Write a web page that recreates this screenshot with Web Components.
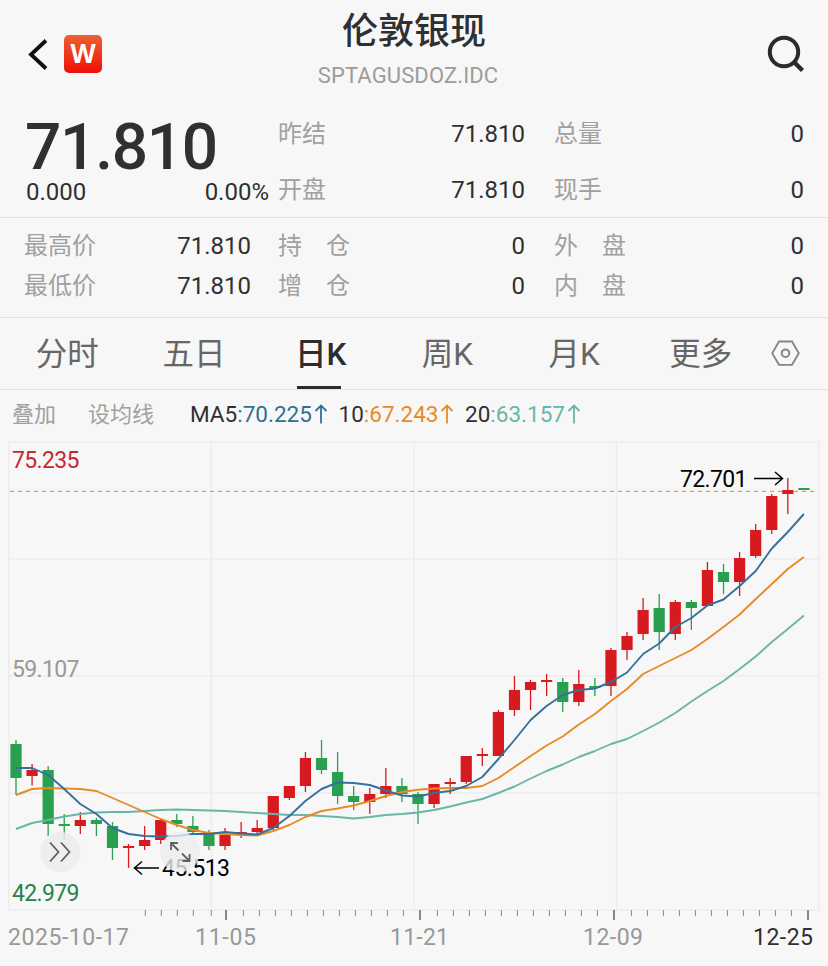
<!DOCTYPE html>
<html lang="zh-CN">
<head>
<meta charset="utf-8">
<title>伦敦银现</title>
<style>
  body {
    margin: 0;
    background: #f7f7f7;
    color: #303030;
    font-family: Roboto, "Noto Sans CJK SC", sans-serif;
  }
</style>
</head>
<body>
<quote-page></quote-page>

<script>
/**
 * Title bar: back arrow, app logo, instrument name and search
 */
class QuoteHeader extends HTMLElement {
  constructor() {
    super();
    this.attachShadow({mode: 'open'}).innerHTML = `
      <style>
        :host { display: grid; grid-template-columns: 160px 1fr 160px; height: 106px; }
        .left { display: flex; align-items: center; height: 108px; padding-left: 26px; gap: 15px; }
        .logo {
          width: 38px; height: 38px; border-radius: 5px;
          background: linear-gradient(#ee6030, #ee1008);
          color: #fff; font: bold 26px/37px "Open Sans", sans-serif; text-align: center;
        }
        .mid { text-align: center; }
        .name { font-size: 36px; line-height: 40px; font-weight: 500; padding-top: 12px; }
        .code { font-size: 22px; line-height: 26px; color: #9c9c9c; margin: 11px 12px 0 0; letter-spacing: .12px; }
        .right { display: flex; justify-content: flex-end; padding: 32px 20px 0 0; }
        svg { display: block; }
      </style>
      <div class="left">
        <svg width="23" height="38" fill="none" stroke="#111" stroke-width="3.8"><path d="M20 5.5 5 19.5 20 33.5"/></svg>
        <div class="logo">W</div>
      </div>
      <div class="mid">
        <div class="name"><slot name="name"></slot></div>
        <div class="code"><slot name="code"></slot></div>
      </div>
      <div class="right">
        <svg width="44" height="44" fill="none" stroke="#2b2b2b" stroke-width="4">
          <circle cx="20" cy="20" r="14.2"/><path d="M30 30 38.5 38.5" stroke-width="4.4"/>
        </svg>
      </div>
    `;
  }
}

/**
 * One label/value pair, data-wide spreads the label to three characters
 */
class StatItem extends HTMLElement {
  connectedCallback() {
    var label = this.getAttribute('data-label');
    var wide = this.hasAttribute('data-wide');
    var chars = wide ? label.split('').map(c => `<span>${c}</span>`).join('') : label;
    this.attachShadow({mode: 'open'}).innerHTML = `
      <style>
        :host { display: flex; justify-content: space-between; align-items: center; height: 40px; font-size: 24px; }
        .label { display: flex; justify-content: space-between; color: #a0a0a0; font-size: 24px; margin-top: -3px; }
        .wide { width: 72px; }
        .value { padding-top: 1px; }
      </style>
      <span class="label ${wide ? 'wide' : ''}">${chars}</span>
      <span class="value"><slot></slot></span>
    `;
  }
}

class QuoteSummary extends HTMLElement {
  constructor() {
    super();
    this.attachShadow({mode: 'open'}).innerHTML = `
      <style>
        :host { display: block; }
        .row { display: grid; border-bottom: 1px solid #e3e3e3; padding: 0 24px 0 25px; box-sizing: border-box; }
        .top { grid-template-columns: 244px 247px 250px; column-gap: 9px; height: 112px; }
        .top stat-item + stat-item { margin-top: 16px; }
        .top .col { padding-top: 7px; }
        .top .col:last-child { margin-left: 20px; margin-right: -20px; }
        .price { font-size: 64px; line-height: 64px; font-weight: 500; padding-top: 10px; letter-spacing: -1.3px; }
        .diff { display: flex; justify-content: space-between; font-size: 24px; line-height: 28px; margin-top: -2px; padding-left: 1px; }
        .more { grid-template-columns: 227px 247px 250px; column-gap: 27px; height: 100px; padding: 7px 24px 0; }
        .more .col:last-child { margin-left: 2px; margin-right: -2px; }
      </style>
      <div class="row top">
        <div>
          <div class="price">71.810</div>
          <div class="diff"><span>0.000</span><span>0.00%</span></div>
        </div>
        <div class="col">
          <stat-item data-label="昨结">71.810</stat-item>
          <stat-item data-label="开盘">71.810</stat-item>
        </div>
        <div class="col">
          <stat-item data-label="总量">0</stat-item>
          <stat-item data-label="现手">0</stat-item>
        </div>
      </div>
      <div class="row more">
        <div class="col">
          <stat-item data-label="最高价">71.810</stat-item>
          <stat-item data-label="最低价">71.810</stat-item>
        </div>
        <div class="col">
          <stat-item data-label="持仓" data-wide>0</stat-item>
          <stat-item data-label="增仓" data-wide>0</stat-item>
        </div>
        <div class="col">
          <stat-item data-label="外盘" data-wide>0</stat-item>
          <stat-item data-label="内盘" data-wide>0</stat-item>
        </div>
      </div>
    `;
  }
}

class PeriodTabs extends HTMLElement {
  connectedCallback() {
    var active = this.getAttribute('data-active');
    var tabs = this.getAttribute('data-tabs').split('/').map(t =>
      `<div class="tab ${t == active ? 'on' : ''}"><span>${t}</span></div>`).join('');
    this.attachShadow({mode: 'open'}).innerHTML = `
      <style>
        :host { display: flex; height: 72px; box-sizing: border-box; border-bottom: 1px solid #e3e3e3; padding-left: 4px; }
        .tab { width: 126.7px; display: flex; flex-direction: column; align-items: center; font-size: 31.5px; line-height: 73px; color: #666; }
        .on { color: #2d2d2d; font-weight: 500; }
        .on::after { content: ""; width: 44px; height: 3px; background: #2d2d2d; margin: -5px 4px 0 0; }
        svg { margin: 19px 0 0 5px; }
      </style>
      ${tabs}
      <svg width="34" height="32" fill="none" stroke="#858585" stroke-width="1.8">
        <path d="M10 4.5H23L29.8 16.2 23 27.8H10L3.2 16.2Z"/><circle cx="16.5" cy="16.2" r="3.8" stroke-width="2"/>
      </svg>
    `;
  }
}

class MaLegend extends HTMLElement {
  constructor() {
    super();
    this.attachShadow({mode: 'open'}).innerHTML = `
      <style>
        :host { display: flex; align-items: center; height: 49px; padding-left: 12px; font-size: 22.5px; }
        .btn { color: #a0a0a0; font-size: 22px; margin-top: -5px; }
        .set { margin-left: 32px; margin-right: 36px; }
        .ma { display: flex; align-items: center; margin-top: -2px; }
        .five { width: 148.5px; }
        .ten { width: 126.5px; }
        .five b { color: #2d7391; }
        .ten b { color: #e88a26; }
        .twenty b { color: #68b6a9; }
        b { font-weight: 400; }
        svg { margin-left: 2px; }
      </style>
      <span class="btn">叠加</span>
      <span class="btn set">设均线</span>
      ${this.item('five', 'MA5', '70.225', '#2d7391')}
      ${this.item('ten', '10', '67.243', '#e88a26')}
      ${this.item('twenty', '20', '63.157', '#68b6a9')}
    `;
  }

  item(cls, name, value, color) {
    return `<div class="ma ${cls}"><span>${name}<b>:${value}</b></span>
      <svg width="14" height="22" fill="none" stroke="${color}" stroke-width="1.8"><path d="M7 20.5V2.5M1.5 8 7 2.5 12.5 8"/></svg></div>`;
  }
}

/**
 * Daily candles with moving averages, y values are plot pixels from the page top
 */
class KlineChart extends HTMLElement {
  constructor() {
    super();
    this.step = 16.08;
    // [up/down, body top, body bottom, high, low]
    this.candles = [
      ['g',744,778,740,795],['r',770,776,764,785.5],['g',770,824,766,836],['g',824,826,814,840],['r',820,826,812,834],
      ['g',820,824,818,836],['g',826,848,822,860],['r',846,848,844,868],['r',840,846,826,850],['r',820,840,818,844],
      ['g',820,824,814,827],['g',826,832,816,834],['g',834,846,830,850],['r',835,846,828,850],['r',832,834,822,838],
      ['r',828,832,820,834],['r',796,828,796,830],['r',786,798,786,800],['r',758,786,752,792],['g',758,770,740,774],
      ['g',772,796,752,804],['g',796,802,786,810],['r',794,802,788,814],['r',786,794,768,798],['g',786,794,778,802],
      ['g',794,804,792,824],['r',784,804,784,808],['r',782,784,778,794],['r',756,782,756,784],['r',754,756,748,766],
      ['r',712,756,710,756],['r',690,710,676,716],['r',682,690,680,710],['r',680,682,674,696],['g',682,702,678,712],
      ['r',684,702,670,706],['g',686,688,678,696],['r',650,686,648,696],['r',636,650,632,660],['r',610,634,598,640],
      ['g',608,632,594,650],['r',602,634,600,640],['g',602,608,600,630],['r',570,606,562,606],['g',572,582,564,594],
      ['r',558,582,552,596],['r',530,556,524,558],['r',496,530,494,534],['r',490,494,478,514],['g',488,490,488,490]
    ];
    this.ma5 = [768,768,775,789,804,814,828,834,836,836.5,836,834,834,832,833.5,834.5,828,816,801,789,782.5,783,785,790.5,795.5,796.5,793,791,786,777,759,740,720,706,695,690,688.5,682,672.5,654,643.5,627,618,605.5,599.5,586,571,548.5,532,514];
    this.ma10 = [795,789,788,788.5,789,791,798,805,812,819,825,830,833,834,835,835.5,831,825,817,811,808.5,805.5,801,796,792,789.7,788.5,788,788,786,778,767,756,745.5,736.5,724.5,714,701,689,674,666,658,650,639,627,614.5,599,584,569,557];
    this.ma20 = [829,823,820,816.5,814,812.5,812,812,811,810,809.5,810,810.5,811,812,813,814,815,815,816,817,818.5,817,815,814,812.5,810,806.5,802.5,799,793,786.5,778.5,771,764.5,757,751,744,739,731,722.5,713,701.5,691,681,669,656.5,642,629,615.5];

    this.attachShadow({mode: 'open'}).innerHTML = `
      <style>
        :host { display: block; height: 527px; }
        svg { display: block; }
        text { font-size: 23px; }
      </style>
      <svg width="828" height="527" viewBox="0 439 828 527">${this.draw()}</svg>
    `;
  }

  x(i) {
    return 16 + i * this.step;
  }

  draw() {
    return this.grid() + this.drawCandles()
      + this.line(this.ma20, '#68b6a9') + this.line(this.ma10, '#e88a26') + this.line(this.ma5, '#35719a')
      + this.labels() + this.buttons();
  }

  grid() {
    var out = '<g stroke="#ececec" stroke-width="1.4">';
    [442, 559, 676, 793, 910].forEach(y => { out += `<path d="M8.5 ${y}H819"/>`; });
    [8.8, 211.4, 414.2, 616.5, 819].forEach(x => { out += `<path d="M${x} 441V911"/>`; });
    out += '</g><path d="M10 491.3H814" stroke="#dfa23c" stroke-width="1.3" stroke-dasharray="4 4"/>';
    // axis ticks
    out += '<g stroke="#888">';
    [145.3, 161.3, 177.3, 193.3, 211.3].forEach(x => { out += `<path d="M${x} 910V916"/>`; });
    for (var n = 0; n < 4; n++) {
      var x0 = 226 + n * 194;
      out += `<path d="M${x0} 910V920" stroke-width="2"/>`;
      for (var k = 0; k < 11 && n < 3; k++) {
        out += `<path d="M${x0 + 17.4 + k * 16} 910V916"/>`;
      }
    }
    return out + '</g>';
  }

  drawCandles() {
    return this.candles.map((c, i) => {
      var color = c[0] == 'r' ? '#d71a20' : '#28a050';
      var x = this.x(i);
      return `<path d="M${x} ${c[3]}V${c[4]}" stroke="${color}" stroke-width="1.3"/>
        <rect x="${x - 5.6}" y="${c[1]}" width="11.2" height="${c[2] - c[1]}" fill="${color}"/>`;
    }).join('');
  }

  line(ys, color) {
    var pts = ys.map((y, i) => this.x(i).toFixed(1) + ',' + y).join(' ');
    return `<polyline points="${pts}" fill="none" stroke="${color}" stroke-width="1.9" stroke-linejoin="round"/>`;
  }

  label(text, x, y, w, color) {
    return `<text x="${x}" y="${y}" textLength="${w}" fill="${color}">${text}</text>`;
  }

  labels() {
    return this.label('75.235', 12, 467.5, 67.5, '#c62830')
      + this.label('59.107', 12, 676.5, 67.5, '#999')
      + this.label('42.979', 12, 900.5, 67.5, '#25834a')
      + this.label('72.701', 680, 486.5, 67.5, '#000')
      + this.label('45.513', 162, 875.5, 68, '#000')
      + '<path d="M754 478.5H782M775 472 782.5 478.5 775 485" fill="none" stroke="#000" stroke-width="1.5"/>'
      + '<path d="M159 868H134.5M142 861.5 134.5 868 142 874.5" fill="none" stroke="#000" stroke-width="1.5"/>'
      + this.label('2025-10-17', 8, 944.5, 121, '#999')
      + this.label('11-05', 195, 944.5, 61, '#999')
      + this.label('11-21', 390, 944.5, 59, '#999')
      + this.label('12-09', 583, 944.5, 60, '#999')
      + this.label('12-25', 753, 944.5, 60, '#303030');
  }

  // translucent round buttons: scroll to latest, full screen
  buttons() {
    return `
      <g fill="#ececec" fill-opacity=".86"><circle cx="60.5" cy="852" r="20"/><circle cx="180" cy="852" r="20" fill-opacity=".8"/></g>
      <g fill="none" stroke="#606060" stroke-width="1.8">
        <path d="M50 842.5 58.5 852 50 861.5M61 842.5 69.5 852 61 861.5"/>
        <path d="M171 850V843H178M171 843 178.5 850.5M182 853.5 189.5 861M182.5 861H189.5V854"/>
      </g>`;
  }
}

class QuotePage extends HTMLElement {
  constructor() {
    super();
    this.attachShadow({mode: 'open'}).innerHTML = `
      <style>
        :host { display: flex; flex-direction: column; width: 828px; height: 966px; overflow: hidden; }
      </style>
      <quote-header>
        <span slot="name">伦敦银现</span>
        <span slot="code">SPTAGUSDOZ.IDC</span>
      </quote-header>
      <quote-summary></quote-summary>
      <period-tabs data-tabs="分时/五日/日K/周K/月K/更多" data-active="日K"></period-tabs>
      <ma-legend></ma-legend>
      <kline-chart></kline-chart>
    `;
  }
}

customElements.define('quote-header', QuoteHeader);
customElements.define('stat-item', StatItem);
customElements.define('quote-summary', QuoteSummary);
customElements.define('period-tabs', PeriodTabs);
customElements.define('ma-legend', MaLegend);
customElements.define('kline-chart', KlineChart);
customElements.define('quote-page', QuotePage);
</script>
</body>
</html>
